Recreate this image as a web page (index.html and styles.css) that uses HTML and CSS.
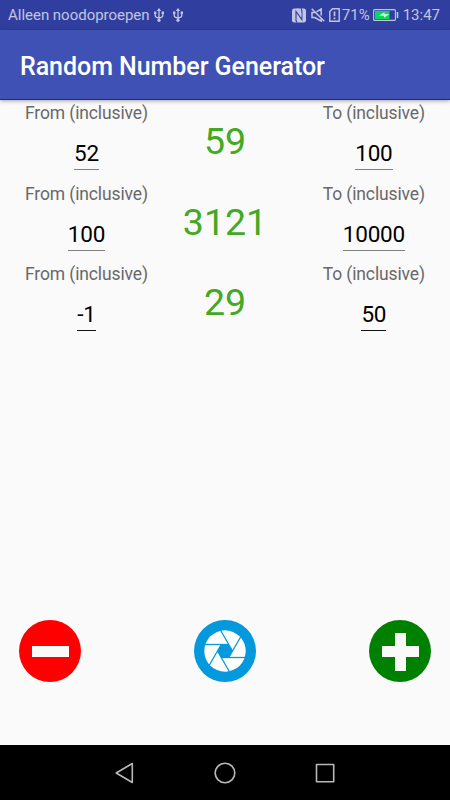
FILE: index.html
```html
<!DOCTYPE html>
<html lang="en">
<head>
    <meta charset="UTF-8">
    <meta name="viewport" content="width=device-width, initial-scale=1.0">
    <title>Random Number Generator</title>
    <link rel="stylesheet" href="styles.css">
</head>
<body>

<div class="status-bar">
    <span class="carrier">Alleen noodoproepen</span>
    <svg class="usb" width="10" height="14" viewBox="0 0 10 14">
        <path d="M5 1v12M1.200 4v3.500q0 2 3.800 2.500M8.800 4v3.500q0 2-3.800 2.500" fill="none" stroke="currentColor" stroke-width="1.300"/>
        <path d="M5 0l2.200 3H2.800zM0 3.500h2.400v2.400H0zM7.600 3.500H10v2.400H7.600z" fill="currentColor"/>
        <circle cx="5" cy="12.300" r="1.600" fill="currentColor"/>
    </svg>
    <svg class="usb" width="10" height="14" viewBox="0 0 10 14">
        <path d="M5 1v12M1.200 4v3.500q0 2 3.800 2.500M8.800 4v3.500q0 2-3.800 2.500" fill="none" stroke="currentColor" stroke-width="1.300"/>
        <path d="M5 0l2.200 3H2.800zM0 3.500h2.400v2.400H0zM7.600 3.500H10v2.400H7.600z" fill="currentColor"/>
        <circle cx="5" cy="12.300" r="1.600" fill="currentColor"/>
    </svg>
    <div class="status-right">
        <svg class="nfc" width="14" height="15" viewBox="0 0 14 15">
            <rect y=".5" width="14" height="14" rx="2.200" fill="currentColor"/>
            <path d="M5 14.500L4 12.500V3.500L9.900 11.500V2.500L9 .5" fill="none" stroke="#303f9f" stroke-width="1.100"/>
            <path d="M4.600 .5h1.800l3 5v3.500z" fill="currentColor"/>
        </svg>
        <svg class="mute" width="14" height="14" viewBox="0 0 14 14">
            <path d="M.7 .7l12.600 12.600M3.800 4.500H1v5h2.800l6.400 3.600V10M10.200 7.500V.9L5.500 3.800" fill="none" stroke="currentColor" stroke-width="1.500"/>
        </svg>
        <svg class="sim" width="11" height="14" viewBox="0 0 11 14">
            <path d="M.8 3.500L3.500 .8h6.700v12.400H.8z" fill="none" stroke="currentColor" stroke-width="1.400"/>
            <path d="M5.500 3.600v4.600M5.500 9.500v1.800" stroke="currentColor" stroke-width="1.700"/>
        </svg>
        <span class="percent">71%</span>
        <svg class="battery" width="26" height="12" viewBox="0 0 26 12">
            <rect x=".6" y=".6" width="21.800" height="10.800" rx="1" fill="none" stroke="currentColor" stroke-width="1.100"/>
            <rect x="2" y="2" width="14.500" height="8" fill="#00dc5a"/>
            <path d="M6 6.500L11.500 3.300v2l5-.3-5.500 3.800v-2z" fill="#e4f5ee"/>
            <path d="M24.500 3v6" stroke="currentColor" stroke-width="1.600"/>
        </svg>
        <span class="clock">13:47</span>
    </div>
</div>

<header class="toolbar">
    <h1>Random Number Generator</h1>
</header>

<main class="content">
    <div class="row">
        <div class="bound">
            <span class="label">From (inclusive)</span>
            <span class="value">52</span>
        </div>
        <div class="result">59</div>
        <div class="bound">
            <span class="label">To (inclusive)</span>
            <span class="value">100</span>
        </div>
    </div>
    <div class="row">
        <div class="bound">
            <span class="label">From (inclusive)</span>
            <span class="value">100</span>
        </div>
        <div class="result">3121</div>
        <div class="bound">
            <span class="label">To (inclusive)</span>
            <span class="value">10000</span>
        </div>
    </div>
    <div class="row">
        <div class="bound">
            <span class="label">From (inclusive)</span>
            <span class="value focused">-1</span>
        </div>
        <div class="result">29</div>
        <div class="bound">
            <span class="label">To (inclusive)</span>
            <span class="value focused">50</span>
        </div>
    </div>
</main>

<div class="actions">
    <button class="action" aria-label="Remove">
        <svg width="62" height="62" viewBox="0 0 62 62">
            <circle cx="31" cy="31" r="31" fill="#ff0000"/>
            <path d="M13 26h37v11H13z" fill="#fafafa"/>
        </svg>
    </button>
    <button class="action" aria-label="Generate">
        <svg width="62" height="62" viewBox="-31 -31 62 62">
            <circle r="31" fill="#0399dc"/>
            <circle r="20.700" fill="#fff"/>
            <!-- shutter blades -->
            <path d="M7.500 0L3.750 6.500H-3.750L-7.500 0L-3.750-6.500H3.750z" fill="#0399dc"/>
            <g stroke="#0399dc" stroke-width="1.300">
                <path id="blade" d="M3.750-6.500H-20.500"/>
                <use href="#blade" transform="rotate(60)"/>
                <use href="#blade" transform="rotate(120)"/>
                <use href="#blade" transform="rotate(180)"/>
                <use href="#blade" transform="rotate(240)"/>
                <use href="#blade" transform="rotate(300)"/>
            </g>
        </svg>
    </button>
    <button class="action" aria-label="Add">
        <svg width="62" height="62" viewBox="0 0 62 62">
            <circle cx="31" cy="31" r="31" fill="#008000"/>
            <path d="M26 13h11v13h13v11H37v14H26V37H13V26h13z" fill="#fafafa"/>
        </svg>
    </button>
</div>

<nav class="nav-bar">
    <svg width="22" height="22" viewBox="0 0 22 22">
        <path d="M18.300 1.500v19L2.200 11z"/>
    </svg>
    <svg width="22" height="22" viewBox="0 0 22 22">
        <circle cx="11" cy="11" r="9.800"/>
    </svg>
    <svg width="22" height="22" viewBox="0 0 22 22">
        <path d="M2.500 2.500h17.200v17.200H2.500z"/>
    </svg>
</nav>

</body>
</html>
```

FILE: styles.css
```css
* {
    box-sizing: border-box;
}
body {
    display: flex;
    flex-direction: column;
    height: 800px;
    margin: 0;
    background-color: #fafafa;
    font-family: Roboto, sans-serif;
    overflow: hidden;
}
svg {
    display: block;
    flex-shrink: 0;
}
.status-bar {
    display: flex;
    align-items: center;
    height: 30px;
    padding: 0 10px 0 8px;
    background-color: #303f9f;
    color: #c1c5e2;
    font-size: 15px;
    line-height: 31px;
    white-space: nowrap;
}
.carrier {
    letter-spacing: -0.02px;
}
.usb {
    margin-left: 4px;
}
.usb + .usb {
    margin-left: 9px;
}
.status-right {
    display: flex;
    align-items: center;
    margin-left: auto;
}
.mute {
    margin-left: 5px;
}
.sim {
    margin-left: 4px;
}
.percent {
    margin-left: 2px;
}
.battery {
    margin-left: 3px;
}
.clock {
    margin-left: 4px;
}
.toolbar {
    display: flex;
    align-items: center;
    height: 70px;
    padding: 3px 20px 0;
    background-color: #3f51b5;
    border-bottom: 1px solid #0c2ba4;
    box-shadow: 0 1px 4px rgba(0, 0, 0, 0.35);
}
.toolbar h1 {
    margin: 0;
    color: #fff;
    font-size: 25px;
    font-weight: 500;
    letter-spacing: -0.05px;
}
.content {
    flex: 1;
    padding: 0.3px 25px 0;
}
.row {
    display: grid;
    grid-template-columns: 1fr auto 1fr;
    height: 80.4px;
}
.bound {
    display: flex;
    flex-direction: column;
    align-items: center;
    justify-self: start;
}
.bound:last-child {
    justify-self: end;
}
.label {
    margin-top: 2px;
    color: #696969;
    font-size: 17.5px;
    line-height: 22px;
    letter-spacing: -0.12px;
}
.value {
    height: 35px;
    margin-top: 11px;
    border-bottom: 1px solid #808080;
    color: #000;
    font-size: 22.5px;
    line-height: 36px;
    letter-spacing: -0.2px;
}
.focused {
    border-bottom-color: #111;
}
.result {
    color: #43a91f;
    font-size: 37.5px;
    line-height: 83px;
}
.actions {
    display: flex;
    justify-content: space-between;
    padding: 0 19px 63px;
}
.action {
    padding: 0;
    border: none;
    background: none;
    cursor: pointer;
}
.nav-bar {
    display: flex;
    align-items: center;
    justify-content: center;
    gap: 78px;
    height: 55px;
    background-color: #000;
}
.nav-bar svg {
    fill: none;
    stroke: #b8b8b8;
    stroke-width: 1.6;
    stroke-linejoin: round;
}
```
